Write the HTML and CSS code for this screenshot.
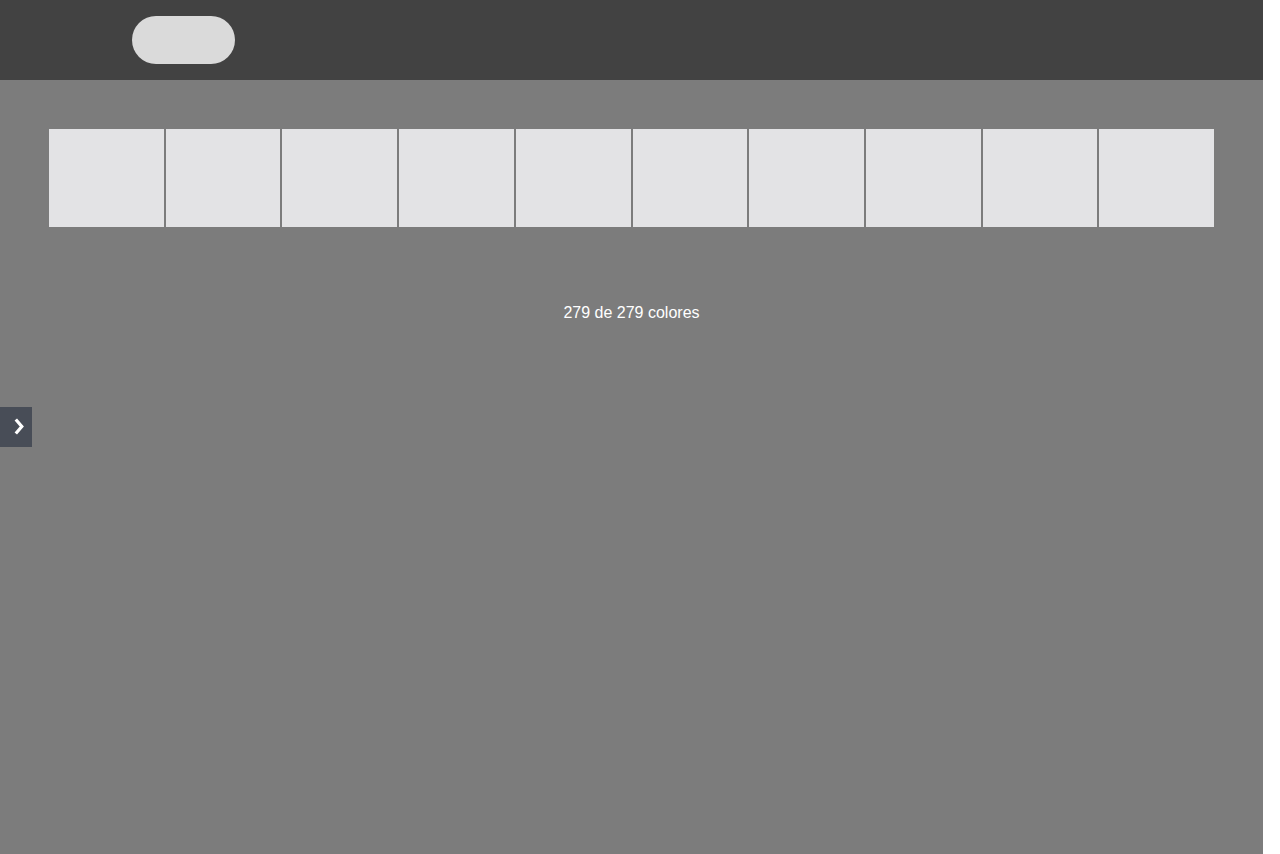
FILE: index.html
```html
<!DOCTYPE html>
<html lang="es">
<head>
<meta charset="utf-8">
<title>Colores</title>
<link rel="stylesheet" href="styles.css">
</head>
<body>
<div class="page">
  <header class="topbar">
    <div class="pill"></div>
  </header>
  <main class="content">
    <div class="swatches">
      <div class="swatch"></div>
      <div class="swatch"></div>
      <div class="swatch"></div>
      <div class="swatch"></div>
      <div class="swatch"></div>
      <div class="swatch"></div>
      <div class="swatch"></div>
      <div class="swatch"></div>
      <div class="swatch"></div>
      <div class="swatch"></div>
    </div>
    <p class="count">279 de 279 colores</p>
  </main>
  <button class="side-toggle" aria-label="Abrir">
    <svg width="32" height="40" viewBox="0 0 32 40"><path d="M15.8 12.5 L21.8 19.5 L15.8 26.5" fill="none" stroke="#fff" stroke-width="3.2"/></svg>
  </button>
</div>
</body>
</html>
```
FILE: styles.css
```css
html, body {
  margin: 0;
  padding: 0;
  background: #ffffff;
  height: 100%;
}
body {
  font-family: "Liberation Sans", Arial, sans-serif;
  overflow: hidden;
}
.page {
  width: 1263px;
  height: 854px;
  background: #7c7c7c;
  position: relative;
  display: flex;
  flex-direction: column;
}
.topbar {
  height: 80px;
  background: #424242;
  display: flex;
  align-items: center;
  padding-left: 132px;
  box-sizing: border-box;
  flex-shrink: 0;
}
.pill {
  width: 103px;
  height: 48px;
  border-radius: 24px;
  background: #dadada;
}
.content {
  padding: 49px 49px 0;
  display: flex;
  flex-direction: column;
  align-items: stretch;
}
.swatches {
  display: flex;
  gap: 2px;
  height: 98px;
}
.swatch {
  flex: 1;
  background: #e3e3e5;
}
.count {
  margin: 76px 0 0;
  text-align: center;
  color: #ffffff;
  font-size: 16px;
  line-height: 20px;
}
.side-toggle {
  position: absolute;
  left: 0;
  top: 407px;
  width: 32px;
  height: 40px;
  border: none;
  padding: 0;
  margin: 0;
  background: #484d57;
  display: block;
  cursor: pointer;
}
.side-toggle svg {
  display: block;
}
```
